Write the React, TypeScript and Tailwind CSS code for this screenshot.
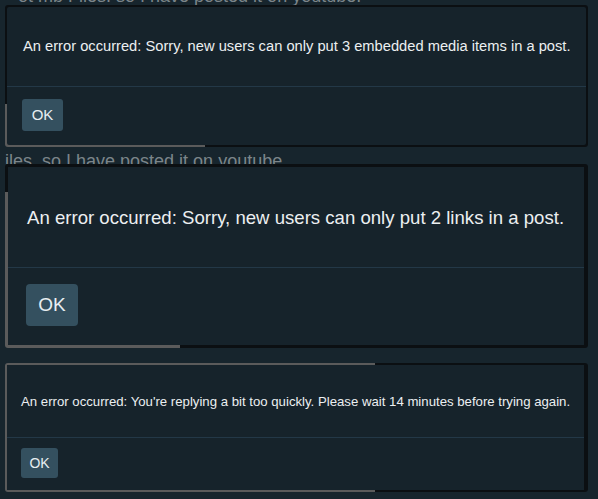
export default function App() {
  return (
    <div className="flex h-[499px] w-[598px] flex-col overflow-hidden bg-[#17252d] font-['Liberation_Sans',Arial,sans-serif]">
      {/* text of the post behind, cut at the top */}
      <div className="h-[5px] overflow-hidden">
        <div className="-mt-[13px] whitespace-nowrap pl-[18px] text-[18px] leading-[18px] text-[#7c858a]">
          ot mb Files. so I have posted it on youtube.
        </div>
      </div>

      {/* dialog 1 */}
      <div className="ml-[5px] mr-[10px] h-[142px] rounded-[3px] bg-[linear-gradient(180deg,#0b0f12_0_70%,transparent_70%),linear-gradient(90deg,#5b5b5b_0_200px,#0b0f12_200px)] p-[2px]">
        <div className="flex h-full flex-col rounded-[2px] bg-[#16232b]">
          <div className="h-[79px] whitespace-nowrap pl-[16px] pt-[30px] text-[14.7px] leading-[18px] text-[#eceff1]">
            An error occurred: Sorry, new users can only put 3 embedded media items in a post.
          </div>
          <div className="h-px bg-[#233847]" />
          <div className="pl-[15px] pt-[12px]">
            <button className="h-[32px] w-[41px] rounded-[3px] bg-[#34505f] text-[15px] text-[#e8eef1]">OK</button>
          </div>
        </div>
      </div>

      <div className="h-[17px] overflow-hidden">
        <div className="mt-[3px] whitespace-nowrap pl-[5px] text-[18px] leading-[22px] text-[#7c858a]">
          iles. so I have posted it on youtube.
        </div>
      </div>

      {/* dialog 2 */}
      <div className="ml-[5px] mr-[10px] h-[184px] rounded-[3px] bg-[linear-gradient(180deg,#0b0f12_0_15%,transparent_15%),linear-gradient(90deg,#5b5b5b_0_175px,#0b0f12_175px)] py-[3px] pl-[3px] pr-[4px]">
        <div className="flex h-full flex-col bg-[#16232b]">
          <div className="h-[100px] whitespace-nowrap pl-[19px] pt-[39px] text-[18.6px] leading-[23px] text-[#eceff1]">
            An error occurred: Sorry, new users can only put 2 links in a post.
          </div>
          <div className="h-px bg-[#233847]" />
          <div className="pl-[18px] pt-[16px]">
            <button className="h-[42px] w-[52px] rounded-[4px] bg-[#34505f] text-[19px] text-[#e8eef1]">OK</button>
          </div>
        </div>
      </div>

      <div className="h-[15px]" />

      {/* dialog 3 */}
      <div className="ml-[5px] mr-[10px] h-[129px] rounded-[3px] bg-[linear-gradient(90deg,#5b5b5b_0_370px,#0b0f12_370px)] py-[2px] pl-[2px] pr-[4px]">
        <div className="flex h-full flex-col bg-[#16232b]">
          <div className="h-[72px] whitespace-nowrap pl-[14px] pt-[28px] text-[13.2px] leading-[17px] text-[#eceff1]">
            An error occurred: You're replying a bit too quickly. Please wait 14 minutes before trying again.
          </div>
          <div className="h-px bg-[#233847]" />
          <div className="pl-[14px] pt-[10px]">
            <button className="h-[30px] w-[37px] rounded-[3px] bg-[#34505f] text-[14px] text-[#e8eef1]">OK</button>
          </div>
        </div>
      </div>
    </div>
  );
}
